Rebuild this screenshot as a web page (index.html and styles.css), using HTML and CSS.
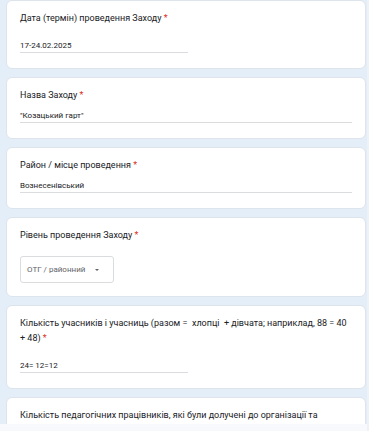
FILE: index.html
```html
<!DOCTYPE html>
<html lang="uk">
<head>
<meta charset="utf-8">
<title>Форма</title>
<link rel="stylesheet" href="styles.css">
</head>
<body>
<main class="form">
  <section class="card">
    <div class="q-title">Дата (термін) проведення Заходу <span class="req">*</span></div>
    <div class="answer answer-short">17-24.02.2025</div>
  </section>
  <section class="card">
    <div class="q-title">Назва Заходу <span class="req">*</span></div>
    <div class="answer answer-long">"Козацький гарт"</div>
  </section>
  <section class="card">
    <div class="q-title">Район / місце проведення <span class="req">*</span></div>
    <div class="answer answer-long">Вознесенівський</div>
  </section>
  <section class="card">
    <div class="q-title">Рівень проведення Заходу <span class="req">*</span></div>
    <div class="select">
      <span class="select-text">ОТГ / районний</span>
      <span class="select-arrow"></span>
    </div>
  </section>
  <section class="card">
    <div class="q-title">Кількість учасників і учасниць (разом =  хлопці  + дівчата; наприклад, 88 = 40 + 48) <span class="req">*</span></div>
    <div class="answer answer-short">24= 12=12</div>
  </section>
  <section class="card">
    <div class="q-title">Кількість педагогічних працівників, які були долучені до організації та проведення Заходу (разом = чоловіки + жінки; наприклад, 6 = 2 + 4) <span class="req">*</span></div>
    <div class="answer answer-short">3</div>
  </section>
</main>
<div class="bottom-bar"></div>
<div class="side-strip"></div>
</body>
</html>
```
FILE: styles.css
```css
html, body {
  margin: 0;
  padding: 0;
}
body {
  background: #e3eef9;
  font-family: Roboto, "Noto Sans", Arial, sans-serif;
  color: #202124;
  overflow: hidden;
}
.form {
  display: flex;
  flex-direction: column;
  gap: 8px;
  padding: 0 3px 0 6px;
}
.card {
  background: #ffffff;
  border: 1px solid #dde4ec;
  border-radius: 6px;
  padding: 10px 13px 15px;
}
.q-title {
  font-size: 9px;
  line-height: 15px;
  color: #202124;
  white-space: pre-wrap;
}
.req {
  color: #d93025;
}
.answer {
  font-size: 8px;
  line-height: 12px;
  color: #202124;
  border-bottom: 1px solid #dadce0;
}
.answer-short {
  width: 168px;
  margin-top: 14px;
}
.answer-long {
  margin-top: 7px;
}
.select {
  margin-top: 13px;
  margin-bottom: -2px;
  width: 94px;
  height: 27px;
  box-sizing: border-box;
  border: 1px solid #dadce0;
  border-radius: 3px;
  display: flex;
  align-items: center;
  padding: 0 0 0 6px;
  gap: 10px;
  white-space: nowrap;
}
.select-text {
  flex: none;
  font-size: 8px;
  color: #5f6368;
}
.select-arrow {
  flex: none;
  width: 0;
  height: 0;
  border-left: 2.5px solid transparent;
  border-right: 2.5px solid transparent;
  border-top: 2.5px solid #5f6368;
}
.bottom-bar {
  position: fixed;
  left: 0;
  right: 0;
  bottom: 0;
  height: 7px;
  background: #f7f9fc;
}
.side-strip {
  position: fixed;
  top: 0;
  right: 0;
  bottom: 0;
  width: 2px;
  background: #eef2f7;
}
```
